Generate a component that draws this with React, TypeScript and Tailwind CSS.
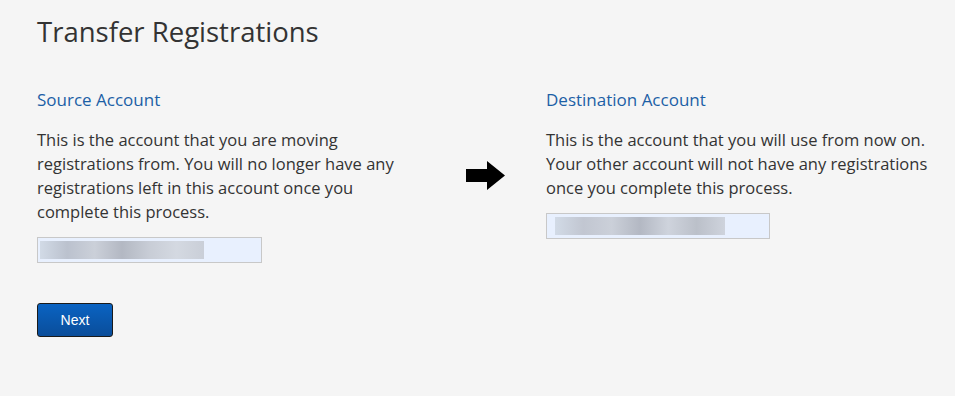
import React from "react";

export default function App() {
  const font = { fontFamily: '"Open Sans", "Noto Sans", sans-serif' };
  return (
    <div className="w-[955px] h-[396px] bg-[#f5f5f5] text-[#333333] pl-[37px] pt-[12px]" style={font}>
      <h1 className="text-[27.5px] leading-[40px] font-normal text-[#333]">Transfer Registrations</h1>
      <div className="flex mt-[36px]">
        <div className="w-[429px]">
          <h2 className="text-[17px] leading-[24px] text-[#1c5fa6] font-normal">Source Account</h2>
          <p className="mt-[16px] w-[360px] text-[16.5px] leading-[24px]">
            This is the account that you are moving registrations from. You will no longer have any registrations left in this account once you complete this process.
          </p>
          <div className="mt-[13px] w-[225px] h-[26px] border border-[#c8c8c8] bg-[#e8f0fe] flex items-center px-[2px]">
            <div className="w-[164px] h-[18px] bg-[linear-gradient(90deg,#ccd5e0,#b0b6c2,#c4c8d0,#a6aab4,#c0c4cc,#cfd3da,#c2c6ce)] opacity-80" />
          </div>
          <button className="mt-[40px] w-[76px] h-[34px] rounded-[3px] border border-[#1a1a1a] bg-[linear-gradient(#0a63c2,#0a4d9a)] text-white text-[14px]" style={{ fontFamily: '"Liberation Sans", Arial, sans-serif' }}>
            Next
          </button>
        </div>
        <div className="w-[40px] pt-[73px]">
          <svg width="40" height="30" viewBox="0 0 40 30">
            <polygon points="0,8 21,8 21,0 39,14.5 21,29 21,21 0,21" fill="#000" />
          </svg>
        </div>
        <div className="ml-[40px] w-[395px]">
          <h2 className="text-[17px] leading-[24px] text-[#1c5fa6] font-normal">Destination Account</h2>
          <p className="mt-[16px] text-[16.5px] leading-[24px]">
            This is the account that you will use from now on. Your other account will not have any registrations once you complete this process.
          </p>
          <div className="mt-[13px] w-[224px] h-[26px] border border-[#c8c8c8] bg-[#e8f0fe] flex items-center px-[8px]">
            <div className="w-[170px] h-[18px] bg-[linear-gradient(90deg,#ccd5e0,#b8bcc6,#c4c8d0,#a6aab4,#c8ccd4,#b0b4bc,#c8ccd4)] opacity-80" />
          </div>
        </div>
      </div>
    </div>
  );
}
